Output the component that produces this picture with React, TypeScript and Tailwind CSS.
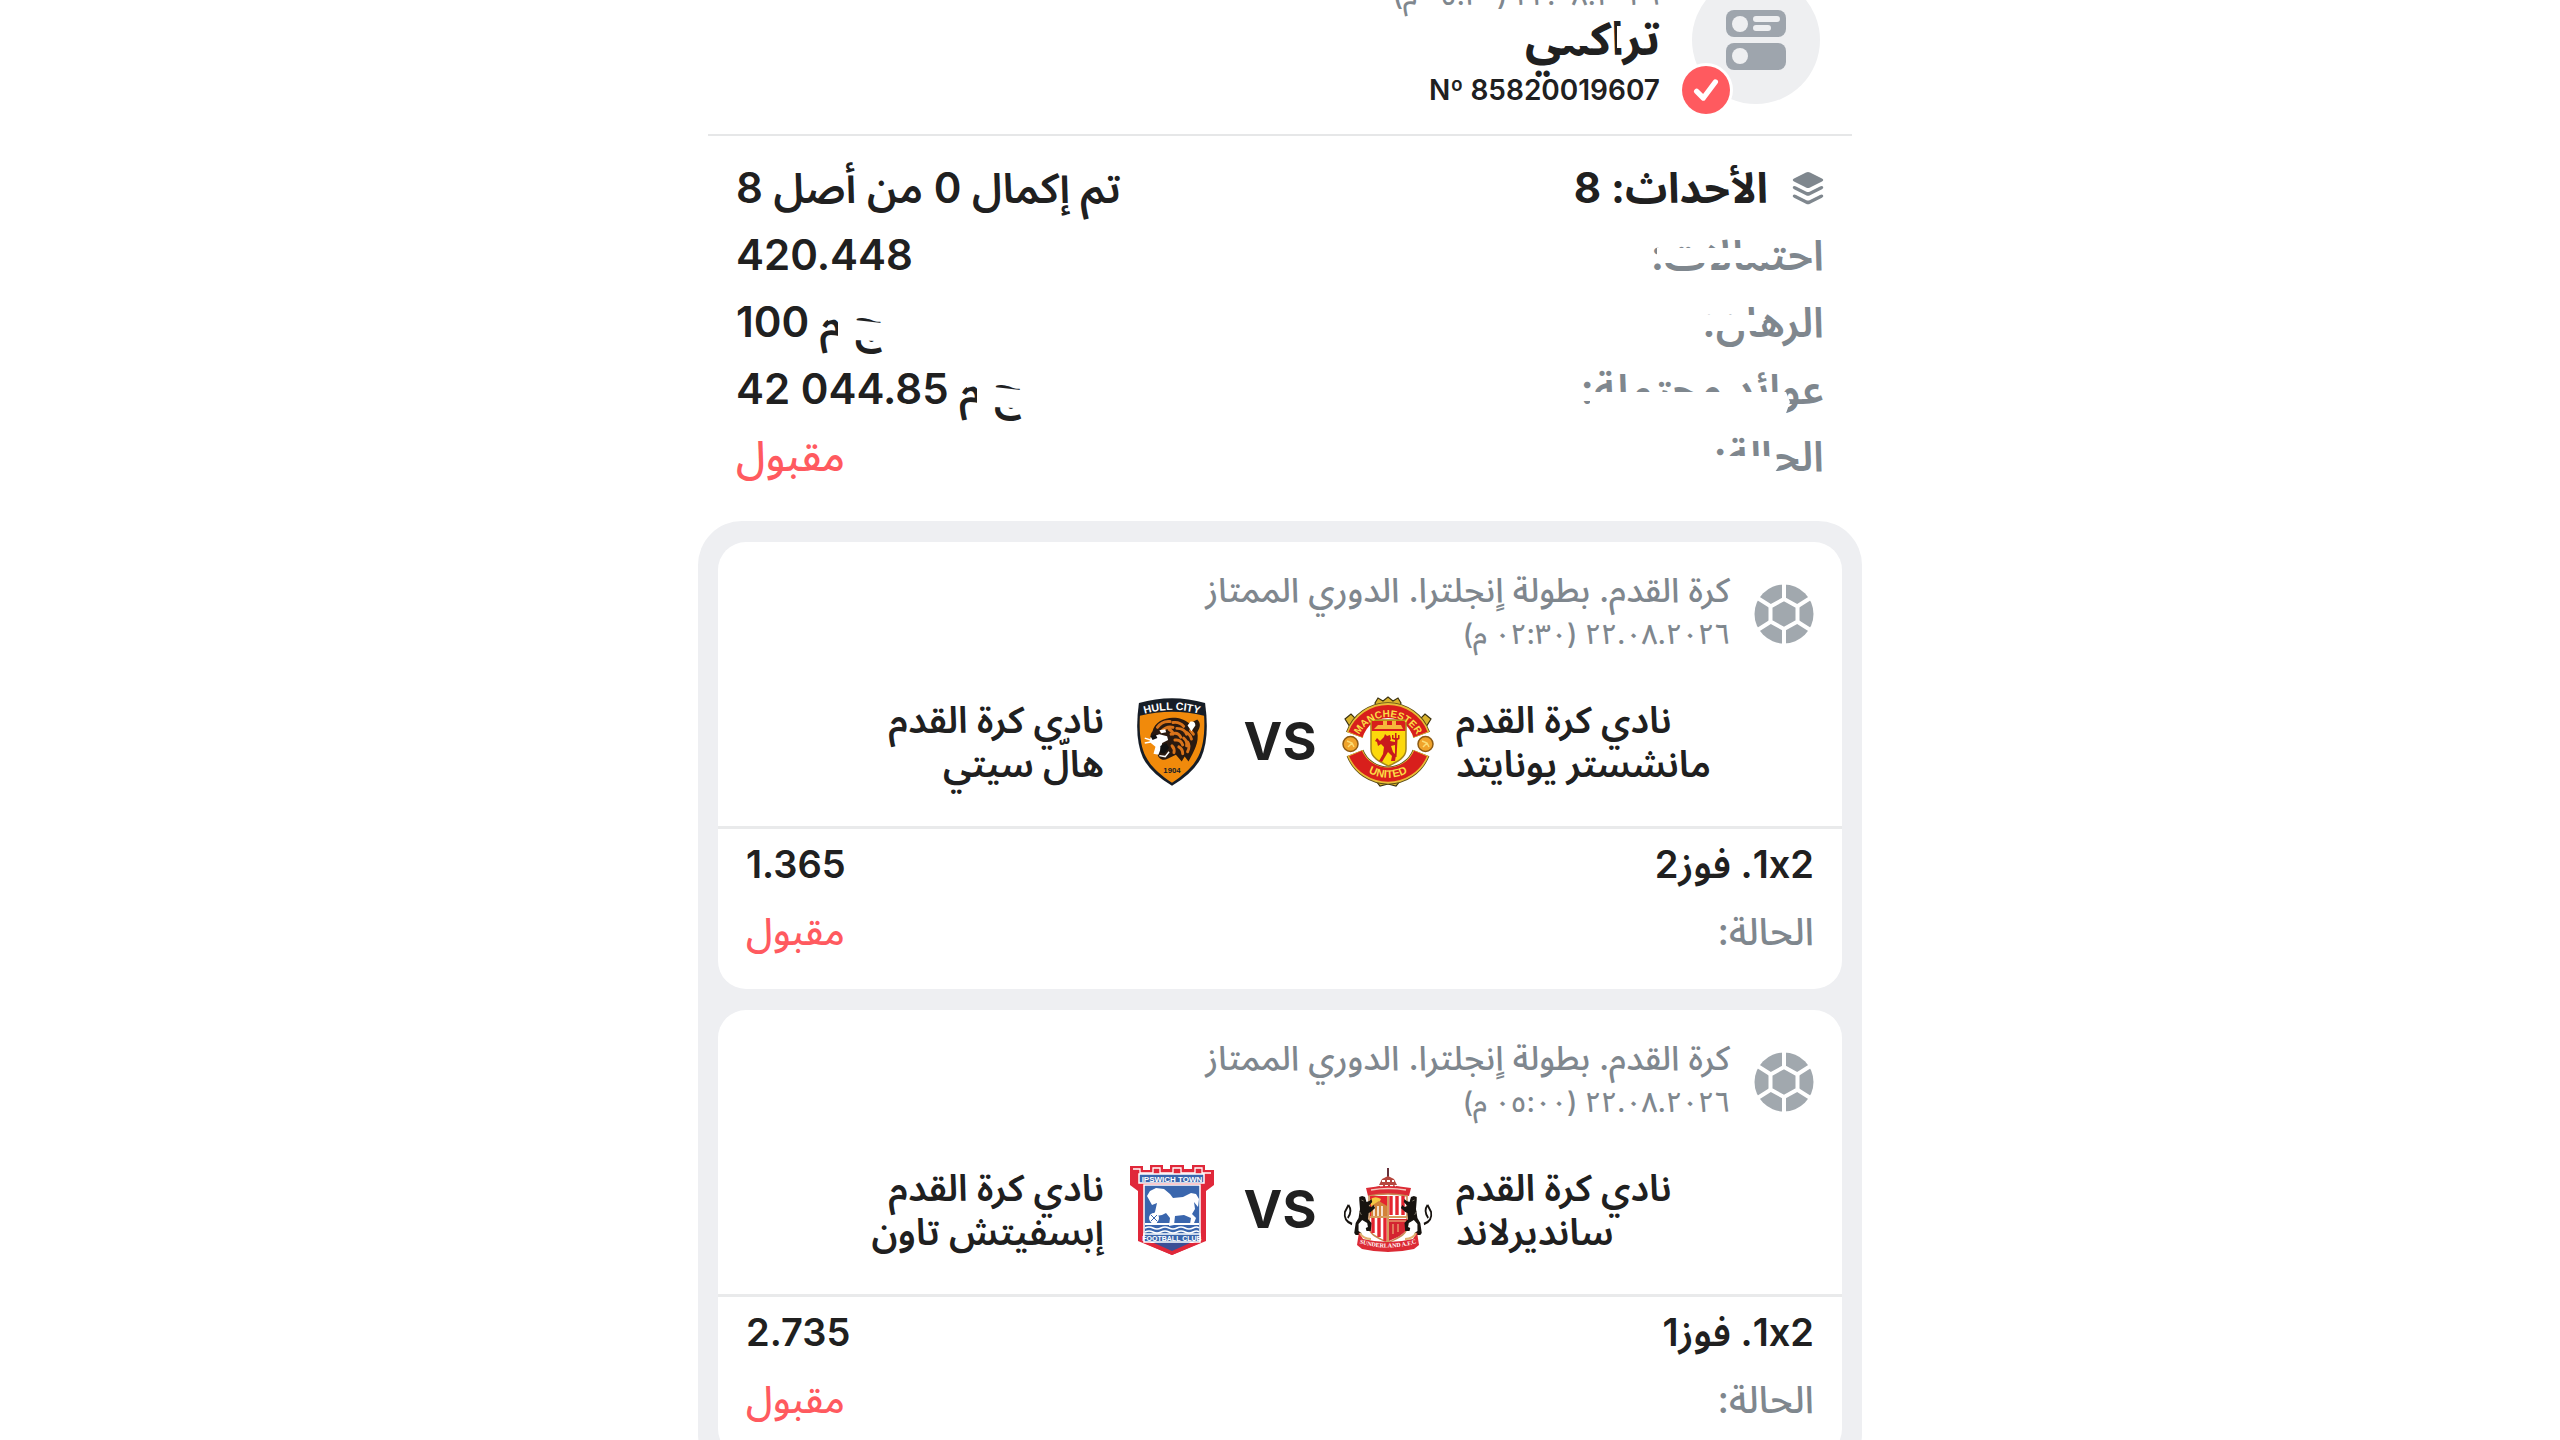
import React from 'react';

interface Team {
  name: string;
  crest: React.ReactNode;
}

interface Match {
  id: string;
  league: string;
  date: string;
  home: Team;
  away: Team;
  pick: string;
  odds: string;
}

const SlipIcon = () => (
  <svg viewBox="0 0 60 60" className="w-15 h-15" aria-hidden="true">
    <rect x="0" y="0" width="60" height="27" rx="8" fill="#9ea5ad" />
    <rect x="0" y="33" width="60" height="27" rx="8" fill="#9ea5ad" />
    <circle cx="14" cy="14" r="8" fill="#eeeff1" />
    <circle cx="14" cy="46" r="8" fill="#eeeff1" />
    <path d="M30 9h21M30 18h12" stroke="#eeeff1" strokeWidth="6" strokeLinecap="round" />
  </svg>
);

const LayersIcon = () => (
  <svg viewBox="0 0 32 34" className="w-8 h-9" aria-hidden="true" fill="#7f878e">
    <path d="M14 1.6q2-1 4 0l12 6q2.500 1.400 0 2.800l-12 6q-2 1-4 0l-12-6q-2.500-1.400 0-2.800z" />
    <path d="M1 15.500q1.500-1 3 0l10 5q2 1 4 0l10-5q1.500-1 3 0 1 1.500-1 2.700l-12 6q-2 1-4 0l-12-6q-2-1.200-1-2.700z" />
    <path d="M1 24q1.500-1 3 0l10 5q2 1 4 0l10-5q1.500-1 3 0 1 1.500-1 2.700l-12 6q-2 1-4 0l-12-6q-2-1.200-1-2.700z" />
  </svg>
);

const BallIcon = () => (
  <svg viewBox="0 0 60 60" className="w-15 h-15 shrink-0" aria-hidden="true">
    <circle cx="30" cy="30" r="29.500" fill="#a1a8ae" />
    <path
      d="M30 0v16M30 44v16M2 13l15 9.500M17 37.500L2 47M43 22.500L58 13M43 37.500L58 47"
      stroke="#fff"
      strokeWidth="4"
    />
    <path d="M30 15l13.500 7.500v15L30 45l-13.500-7.500v-15z" fill="none" stroke="#fff" strokeWidth="4" />
  </svg>
);

const ManchesterCrest = () => (
  <svg viewBox="0 0 92 92" className="w-23 h-23" role="img" aria-label="Manchester United">
    <defs>
      <path id="mu-top" d="M16 42a32 32 0 0 1 60 0" />
      <path id="mu-bottom" d="M9 57a40 40 0 0 0 74 0" />
    </defs>
    <g fill="#d9b32c" stroke="#3c3210" strokeWidth="1.200">
      <path d="M33 7l3-5 5 3 5-4 5 4 5-3 3 5-2 5H35zM3 23l6-5 4 4-5 9zM89 23l-6-5-4 4 5 9zM34 85l4 5 8-2 8 2 4-5-4-4H38z" />
    </g>
    <path d="M13 39a35 35 0 0 1 66 0" fill="none" stroke="#5b4a16" strokeWidth="19" />
    <path d="M13 39a35 35 0 0 1 66 0" fill="none" stroke="#e8bd36" strokeWidth="17.500" />
    <path d="M13.500 38.500a35 35 0 0 1 65 0" fill="none" stroke="#d81f1c" strokeWidth="15" />
    <circle cx="46" cy="48" r="26" fill="#fff" />
    <path d="M13 57a35.500 35.500 0 0 0 66 0" fill="none" stroke="#5b4a16" strokeWidth="18" />
    <path d="M13 57a35.500 35.500 0 0 0 66 0" fill="none" stroke="#e8bd36" strokeWidth="16.500" />
    <path d="M13.500 57.500a35.500 35.500 0 0 0 65 0" fill="none" stroke="#d81f1c" strokeWidth="14" />
    <circle cx="8.500" cy="48" r="7.500" fill="#f0a32b" stroke="#8b5a14" strokeWidth="1.500" />
    <circle cx="83.500" cy="48" r="7.500" fill="#f0a32b" stroke="#8b5a14" strokeWidth="1.500" />
    <path d="M5 45l5 2 2 4M80 45l5 2 2 4M10 47l-4 4M85 47l-4 4" fill="none" stroke="#fbdc74" strokeWidth="1.500" />
    <path d="M29 24h35v29c0 9-9 13-17.500 17C38 66 29 62 29 53z" fill="#fcd80c" stroke="#a3851b" strokeWidth="1.500" />
    <path d="M29.800 25h33.500v10H29.800z" fill="#d81f1c" />
    <path d="M32 33h29l-2-4h-5v-4h-4v4h-5v-4h-4v4h-5z" fill="#f6b93b" />
    <path
      d="M42 41l1-3 2 2 3-1 1 4-1 2 5 1v-2l-3-1v-4h1.500v3H53v-5h1.500v5H56v-3h1.500v4l-2 1-1 17H53V49l-4 1 2 6 3 3-1 6h-4l1-5-4-4-3 5-3 5-3-1 4-7 1-7-3-3-3 2-1-4-2-1 2-3 3 3z"
      fill="#c91a1c"
    />
    <text fontFamily="Liberation Sans" fontSize="10" fontWeight="700" fill="#fbdc45" textAnchor="middle">
      <textPath href="#mu-top" startOffset="50%">MANCHESTER</textPath>
    </text>
    <text fontFamily="Liberation Sans" fontSize="11" fontWeight="700" fill="#fbdc45" textAnchor="middle">
      <textPath href="#mu-bottom" startOffset="50%">UNITED</textPath>
    </text>
  </svg>
);

const HullCrest = () => (
  <svg viewBox="0 0 74 92" className="w-18 h-23" role="img" aria-label="Hull City">
    <defs>
      <path id="hull-name" d="M9 17q28-8 56 0" />
    </defs>
    <path d="M3 6q34-10 68 0 5 36-4 56Q59 78 37 91 15 78 7 62-2 42 3 6z" fill="#161d27" />
    <path d="M4 19q33-8 66 0c1 18-1 32-6 42-5 10-14 18-27 27C24 79 15 71 10 61 5 51 3 37 4 19z" fill="#f18a0b" />
    <text fontFamily="Liberation Sans Narrow, Liberation Sans" fontSize="11" fontWeight="700" fill="#fff" textAnchor="middle">
      <textPath href="#hull-name" startOffset="50%">HULL CITY</textPath>
    </text>
    <path d="M17 35c2-9 11-14 21-14 7 0 12 2 17 6l8-4c4 4 3 8 0 13 2 10-3 19-9 30l-4-5-3 5-6-7-8 4c-6 3-10 0-11-5l4-8-6-2c-5-4-7-8-3-13z" fill="#2a1a10" />
    <g stroke="#d9731a" strokeWidth="3" fill="none" strokeLinecap="round">
      <path d="M22 31q5-7 13-6M26 35q6-6 12-4M38 26q7-1 11 4M42 32q8 0 10 6M36 38q7-3 10 3M40 44q6-1 8 5M50 35q6 3 7 8M44 51q4 2 4 7M53 46q3 4 0 10M34 33q4 2 4 5M49 42q4 3 3 8M37 50q3 3 2 7M56 34l3 4" />
    </g>
    <path d="M56 25q5-1 5 4l-4 6-4-6zM15 41l9-3 8 2 1 4-6 3-2 7-2 5-5-1 2-7-6-5z" fill="#fff" />
    <path d="M24 34l6-1 1 3-5 1z" fill="#fff" />
    <path d="M15 40l5-2 2 4-5 2zM25 50l6-3 3 5-5 6-4-1z" fill="#111" />
    <path d="M15 44L9 42M15 46l-6 1M24 60l6 1 4-5" stroke="#fff" strokeWidth="1.500" fill="none" />
    <text x="37" y="78" fontFamily="Liberation Sans Narrow, Liberation Sans" fontSize="8" fontWeight="700" fill="#161d27" textAnchor="middle">
      1904
    </text>
  </svg>
);

const Lion = () => (
  <g transform="scale(0.72 1)">
    <path
      d="M24 29l4-1 4 1 2 5 4-1 3-2 1 3-5 4 4 1 3-2 2 3-6 4-3 1-1 6 5 4-1 8h-6l-1-3 3-1-1-4-7-3-5 4 0 7 4 2-1 2h-7l-2-2 2-10 4-5 2-9-1-9z"
      fill="#17130f"
    />
    <path d="M14 56Q2 53 4 44l5-7M9 37q6 6-1 13" fill="none" stroke="#17130f" strokeWidth="2.400" />
    <path d="M27 32l3 1M24 43l3 4" stroke="#847b6c" strokeWidth="1" />
  </g>
);

const SunderlandCrest = () => (
  <svg viewBox="0 0 92 84" className="w-23 h-21" role="img" aria-label="Sunderland">
    <defs>
      <path id="sun-name" d="M17 75q29 9 58 0" />
    </defs>
    <path d="M46 0v14" stroke="#65313a" strokeWidth="2" />
    <path d="M37 17l3-6 6-3 6 3 3 6zM34 19q12-5 24 0l-3 7H37z" fill="#b5463e" />
    <path d="M38 18h16M40 13h12M37 23h18" stroke="#fff" strokeWidth="2" strokeDasharray="3 2" />
    <path d="M24 20q22-4 45 0l-2 8q-21-4-41 0z" fill="#dc2b35" />
    <path d="M29 22q17-3 35 0" fill="none" stroke="#f4c9bd" strokeWidth="1.500" />
    <path d="M27 28q19-4 38 0v31c0 8-10 11-19 16-9-5-19-8-19-16z" fill="#fff" stroke="#c98a52" strokeWidth="1.500" />
    <path d="M28 28h18v20H28z" fill="#e4252f" />
    <path d="M28 32q4-5 11-1-2 6-10 7z" fill="#f7c843" />
    <path d="M29 38l8-5 8 5v10H29z" fill="#d3823a" />
    <path d="M32 38v10M36 38v10M40 38v10" stroke="#fff" strokeWidth="1.500" />
    <path d="M49 28v19M55 28v19M61 28v19M31 50v15M37 50v19M43 50v23" stroke="#e4252f" strokeWidth="3.400" />
    <path d="M47 51h18v9c-2 6-11 10-18 13z" fill="#d42430" />
    <path d="M47 53h17M51 56v10M56 56v8" stroke="#e89368" strokeWidth="1.500" />
    <path d="M27 49h38M46 28v46" stroke="#d79b5c" strokeWidth="2" />
    <Lion />
    <g transform="translate(92 0) scale(-1 1)">
      <Lion />
    </g>
    <path d="M17 64l4 7q25 6 50 0l4-7 2 13-5 4q-26 6-52 0l-5-4z" fill="#dc2b35" />
    <path d="M18 65q3 6 11 6M74 65q-3 6-11 6" stroke="#e0b06f" strokeWidth="2" fill="none" />
    <text fontFamily="Liberation Serif" fontSize="6" fontWeight="700" fill="#fff" textAnchor="middle">
      <textPath href="#sun-name" startOffset="50%">SUNDERLAND A.F.C</textPath>
    </text>
  </svg>
);

const IpswichCrest = () => (
  <svg viewBox="0 0 84 92" className="w-21 h-23" role="img" aria-label="Ipswich Town">
    <path
      d="M0 2h13v4h7V1h13v4h7V1h14v4h8V1h13v5h9v15l-8 6v50L42 91 8 77V27L0 21z"
      fill="#e0283a"
    />
    <path d="M3 5h7v4h13V4h7v5h13V4h8v5h14V4h7v5h9" fill="none" stroke="#fff" strokeWidth="1.300" />
    <path d="M9 10h65v9H9z" fill="#3a66ad" stroke="#fff" strokeWidth="1.500" />
    <text x="42" y="18" fontFamily="Liberation Sans" fontSize="8" fontWeight="700" fill="#fff" textAnchor="middle">
      IPSWICH TOWN
    </text>
    <path d="M14 21h56v54L42 87 14 75z" fill="#3a66ad" stroke="#fff" strokeWidth="1.500" />
    <path
      d="M17 32l3-5 6-3 8 1 6 5 3 4 10-1 8-4 5 1 3 5-1 8-4-5 1 7-3 5 4 4-2 5-4 1 1-6-7-3-9 1-1 9-5 1 1-8-4-5-4 2-6 1 1 7-5 2-2-7 5-6 2-9-5 2z"
      fill="#fff"
    />
    <circle cx="24" cy="54" r="5" fill="#fff" />
    <path d="M21 51l6 6M27 51l-6 6" stroke="#3a66ad" strokeWidth="1" />
    <path d="M15 60h54" stroke="#fff" strokeWidth="2" />
    <path
      d="M15 64q4-2 8 0t8 0 8 0 8 0 8 0 8 0 6 0M15 68q4-2 8 0t8 0 8 0 8 0 8 0 8 0 6 0"
      fill="none"
      stroke="#fff"
      strokeWidth="1.500"
    />
    <path d="M14 70h56v8H14z" fill="#3a66ad" stroke="#fff" strokeWidth="1.500" />
    <text x="42" y="77" fontFamily="Liberation Sans" fontSize="7" fontWeight="700" fill="#fff" textAnchor="middle">
      FOOTBALL CLUB
    </text>
    <path d="M14 79h56L42 91z" fill="#e0283a" />
    <path d="M24 79h36L42 87z" fill="#3b4f96" />
  </svg>
);

// White brush marks that wipe out part of a label
const Wiped: React.FC<{ d: string; children: React.ReactNode }> = ({ d, children }) => (
  <span className="inline-block relative">
    {children}
    <svg viewBox="0 0 260 67" className="absolute right-0 top-0 w-[260px] h-[67px] max-w-none" fill="#fff" aria-hidden="true">
      <path d={d} />
    </svg>
  </span>
);

const Currency = () => (
  <span className="inline-block relative">
    ج.م
    <svg viewBox="0 0 70 67" className="absolute left-0 top-0 w-[70px] h-[67px] max-w-none" fill="#fff" aria-hidden="true">
      <path d="M34 32l10 1 26 3v14l-14 3-22-1zM18 20h16v44H18zM8 29l12-4v5l-12 3z" />
    </svg>
  </span>
);

const leagueName = 'كرة القدم. بطولة اٍنجلترا. الدوري الممتاز';

const matches: Match[] = [
  {
    id: 'mun-hul',
    league: leagueName,
    date: '٢٢.٠٨.٢٠٢٦ (٠٢:٣٠ م)',
    home: { name: 'مانشستر يونايتد', crest: <ManchesterCrest /> },
    away: { name: 'هالّ سيتي', crest: <HullCrest /> },
    pick: 'فوز2',
    odds: '1.365',
  },
  {
    id: 'sun-ips',
    league: leagueName,
    date: '٢٢.٠٨.٢٠٢٦ (٠٥:٠٠ م)',
    home: { name: 'سانديرلاند', crest: <SunderlandCrest /> },
    away: { name: 'إبسفيتش تاون', crest: <IpswichCrest /> },
    pick: 'فوز1',
    odds: '2.735',
  },
];

const MatchCard: React.FC<{ match: Match }> = ({ match }) => (
  <article className="bg-white rounded-[28px]">
    <div className="flex items-start gap-6 px-7 pt-[26px]">
      <div className="pt-4">
        <BallIcon />
      </div>
      <div className="font-medium text-[#7f878e]">
        <p className="text-[34px] leading-11">{match.league}</p>
        <p className="text-[28px] leading-11">{match.date}</p>
      </div>
    </div>

    <div dir="ltr" className="flex items-center pt-10 pb-[38px]">
      <p dir="rtl" className="flex-1 text-start text-[37px] leading-11 font-semibold px-5">
        نادي كرة القدم
        <br />
        {match.away.name}
      </p>
      <div className="w-24 flex justify-center">{match.away.crest}</div>
      <span className="w-30 text-center text-[52px] leading-none font-bold">VS</span>
      <div className="w-24 flex justify-center">{match.home.crest}</div>
      <p dir="rtl" className="flex-1 text-end text-[37px] leading-11 font-semibold px-5">
        نادي كرة القدم
        <br />
        {match.home.name}
      </p>
    </div>

    <div className="border-t-3 border-[#e9eaeb] px-7 pt-[2px] pb-6">
      <div className="flex justify-between text-[38px] leading-[67px] font-semibold">
        <span>
          <bdi className="[font-feature-settings:'calt'_0]">1x2</bdi>. {match.pick}
        </span>
        <span>{match.odds}</span>
      </div>
      <div className="flex justify-between text-[38px] leading-[67px] font-medium">
        <span className="text-[#7f878e]">الحالة:</span>
        <span className="text-[#ff5a5f]">مقبول</span>
      </div>
    </div>
  </article>
);

const App: React.FC = () => {
  return (
    <main
      dir="rtl"
      className="h-screen overflow-hidden bg-white text-[#202020] font-['Inter','Noto_Sans_Arabic','Noto_Sans','DejaVu_Sans',sans-serif]"
    >
      <div className="max-w-[1164px] mx-auto -mt-6">
        <header className="mx-[10px] px-8 pb-6 flex gap-8 border-b-2 border-[#e6e7e8]">
          <div className="relative w-32 h-32 rounded-full bg-[#eeeff1] flex items-center justify-center">
            <SlipIcon />
            <span className="absolute -bottom-[10px] -left-[10px] w-12 h-12 rounded-full bg-[#ff5a5f] ring-3 ring-white flex items-center justify-center">
              <svg viewBox="0 0 24 24" className="w-8 h-8" fill="none" stroke="#fff" strokeWidth="4" strokeLinecap="round" strokeLinejoin="round">
                <path d="M5 13l5 5L19 6" />
              </svg>
            </span>
          </div>
          <div>
            <p className="text-[28px] leading-[38px] text-[#7f878e] font-medium">٢٢.٠٨.٢٠٢٦ (٠٥:٣٠ م)</p>
            <h1 className="text-[46px] leading-12 font-bold">
              <Wiped d="M217 12h10v22h-10zM156 22h34v10h-34z">تراكمي</Wiped>
            </h1>
            <p dir="ltr" className="pt-2 text-[28px] leading-10 font-semibold text-right">
              Nº 85820019607
            </p>
          </div>
        </header>

        <section className="px-[38px] pt-[18px] pb-8 text-[42px] leading-[67px] font-semibold">
          <div className="flex justify-between">
            <span className="flex items-center gap-6 font-bold">
              <LayersIcon />
              الأحداث: 8
            </span>
            <span>تم إكمال 0 من أصل 8</span>
          </div>
          <div className="flex justify-between">
            <span className="text-[#7f878e]">
              <Wiped d="M93 27H200l8 7-6 8H93z">احتمالات:</Wiped>
            </span>
            <span>420.448</span>
          </div>
          <div className="flex justify-between">
            <span className="text-[#7f878e]">
              <Wiped d="M136 27H194l6 8-8 8H136z">الرهان:</Wiped>
            </span>
            <span><Currency /> <bdi dir="ltr">100</bdi></span>
          </div>
          <div className="flex justify-between">
            <span className="text-[#7f878e]">
              <Wiped d="M26 37H222l4 10-6 17H26zM6 36H26V46H6z">عوائد محتملة:</Wiped>
            </span>
            <span><Currency /> <bdi dir="ltr">42 044.85</bdi></span>
          </div>
          <div className="flex justify-between">
            <span className="text-[#7f878e]">
              <Wiped d="M136 34H204l14 6-14 20H136z">الحالة:</Wiped>
            </span>
            <span className="text-[#ff5a5f] font-medium">مقبول</span>
          </div>
        </section>

        <section className="flex flex-col gap-[21px] bg-[#eeeff2] rounded-[44px] px-5 py-[21px]">
          {matches.map((match) => (
            <MatchCard key={match.id} match={match} />
          ))}
        </section>
      </div>
    </main>
  );
};

export default App;
